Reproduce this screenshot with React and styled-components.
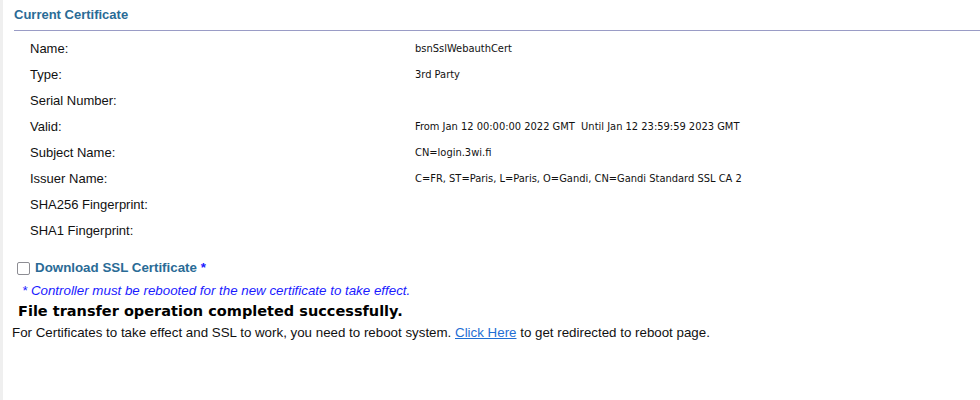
import React from "react";
import styled, { createGlobalStyle } from "styled-components";

const Global = createGlobalStyle`
  html, body { margin: 0; padding: 0; background: #fff; }
  body { font-family: "Liberation Sans", Arial, sans-serif; }
`;

const Page = styled.div`
  display: flex;
  min-height: 400px;
`;

const Gutter = styled.div`
  width: 3px;
  background: #efefef;
  flex: none;
`;

const Main = styled.div`
  flex: 1;
  padding-top: 7px;
`;

const SectionTitle = styled.div`
  margin-left: 11px;
  padding-bottom: 7px;
  border-bottom: 1px solid #9a9cc6;
  color: #2a6b96;
  font-weight: bold;
  font-size: 13px;
  line-height: 16px;
`;

const Table = styled.div`
  display: grid;
  grid-template-columns: 382px 1fr;
  grid-auto-rows: 26px;
  padding: 4px 0 0 27px;
`;

const Label = styled.div`
  font-size: 13px;
  color: #111;
  display: flex;
  align-items: center;
`;

const Value = styled.div`
  font-family: "DejaVu Sans Condensed", "DejaVu Sans", Verdana, sans-serif;
  font-stretch: semi-condensed;
  font-size: 11px;
  color: #111;
  display: flex;
  align-items: center;
  white-space: pre;
  padding-left: 3px;
`;

const CheckRow = styled.label`
  display: flex;
  align-items: center;
  gap: 5px;
  margin: 17px 0 0 14px;
  color: #2a6b96;
  font-weight: bold;
  font-size: 13.33px;
  line-height: 16px;
`;

const Box = styled.span`
  width: 11px;
  height: 11px;
  border: 1px solid #8d8d93;
  border-radius: 2px;
  background: #fff;
`;

const Star = styled.span`
  color: #1a1aff;
`;

const Note = styled.div`
  margin: 7px 0 0 19px;
  font-style: italic;
  color: #1a1aff;
  font-size: 13.33px;
  line-height: 16px;
`;

const Success = styled.div`
  margin: 3px 0 0 15px;
  font-family: "DejaVu Sans", Verdana, sans-serif;
  font-weight: bold;
  font-size: 14.5px;
  line-height: 18px;
  color: #000;
`;

const Info = styled.div`
  margin: 5px 0 0 9px;
  font-size: 13.33px;
  line-height: 16px;
  color: #111;
`;

const Link = styled.a`
  color: #1f6ed4;
  text-decoration: underline;
`;

const rows = [
  ["Name:", "bsnSslWebauthCert"],
  ["Type:", "3rd Party"],
  ["Serial Number:", ""],
  ["Valid:", "From Jan 12 00:00:00 2022 GMT  Until Jan 12 23:59:59 2023 GMT"],
  ["Subject Name:", "CN=login.3wi.fi"],
  ["Issuer Name:", "C=FR, ST=Paris, L=Paris, O=Gandi, CN=Gandi Standard SSL CA 2"],
  ["SHA256 Fingerprint:", ""],
  ["SHA1 Fingerprint:", ""],
];

export default function App() {
  return (
    <>
      <Global />
      <Page>
        <Gutter />
        <Main>
          <SectionTitle>Current Certificate</SectionTitle>
          <Table>
            {rows.map(([l, v]) => (
              <React.Fragment key={l}>
                <Label>{l}</Label>
                <Value>{v}</Value>
              </React.Fragment>
            ))}
          </Table>
          <CheckRow>
            <Box />
            <span>
              Download SSL Certificate <Star>*</Star>
            </span>
          </CheckRow>
          <Note>* Controller must be rebooted for the new certificate to take effect.</Note>
          <Success>File transfer operation completed successfully.</Success>
          <Info>
            For Certificates to take effect and SSL to work, you need to reboot system.{" "}
            <Link href="#">Click Here</Link> to get redirected to reboot page.
          </Info>
        </Main>
      </Page>
    </>
  );
}
